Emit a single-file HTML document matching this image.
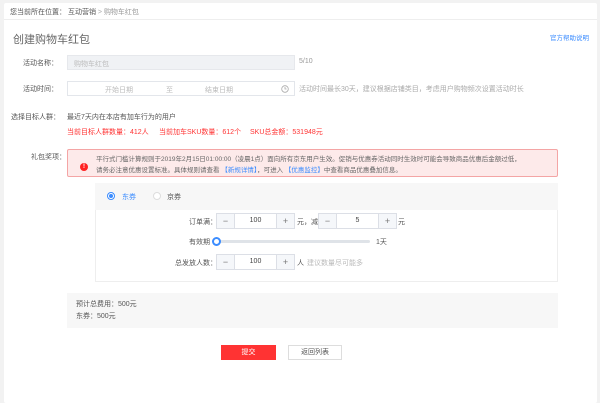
<!DOCTYPE html>
<html><head><meta charset="utf-8"><style>
*{margin:0;padding:0;box-sizing:border-box}
body{width:600px;height:400px;background:#f2f2f2;font-family:"Liberation Sans","Noto Sans CJK SC",sans-serif;font-size:7px;color:#555;position:relative;overflow:hidden}
.a{position:absolute;white-space:nowrap}
.card{position:absolute;left:4px;top:3px;width:593px;height:400px;background:#fff;border-radius:2px}
.lbl{position:absolute;text-align:right;width:56px;left:2px;color:#555}
.inp{position:absolute;border:1px solid #e3e6eb;height:15px;background:#fff}
.st{position:absolute;height:16px;width:79px;border:1px solid #dcdfe6;display:flex;background:#fff}
.st b{width:17px;background:#f5f7fa;color:#777;font-weight:normal;text-align:center;line-height:14px;font-size:9px}
.st span{flex:1;text-align:center;line-height:14px;border-left:1px solid #dcdfe6;border-right:1px solid #dcdfe6;color:#444}
.red{color:#f33}
</style></head><body>
<div class="card"></div>
<div class="a" style="left:4px;top:19px;width:593px;height:1px;background:#eee"></div>
<div class="a" style="left:10px;top:7px;color:#555">您当前所在位置： 互动营销 <span style="color:#aaa">&gt;</span> <span style="color:#999">购物车红包</span></div>
<div class="a" style="left:13px;top:31px;font-size:11px;color:#666">创建购物车红包</div>
<div class="a" style="left:550px;top:32px;color:#3b8cff;font-size:6.5px">官方帮助说明</div>

<div class="lbl a" style="top:58px">活动名称：</div>
<div class="inp" style="left:67px;top:55px;width:228px;background:#f0f2f5;border-color:#e6e8ec"><span class="a" style="left:6px;top:3px;color:#bbb">购物车红包</span></div>
<div class="a" style="left:299px;top:58px;color:#999">5/10</div>

<div class="lbl a" style="top:84px">活动时间：</div>
<div class="inp" style="left:67px;top:81px;width:228px">
<span class="a" style="left:37px;top:3px;color:#bbb">开始日期</span>
<span class="a" style="left:98px;top:3px;color:#bbb">至</span>
<span class="a" style="left:137px;top:3px;color:#bbb">结束日期</span>
<svg class="a" style="left:213px;top:3px" width="8" height="8" viewBox="0 0 8 8"><circle cx="4" cy="4" r="3.3" fill="none" stroke="#aaa" stroke-width=".8"/><path d="M4 2v2h1.6" fill="none" stroke="#aaa" stroke-width=".8"/></svg>
</div>
<div class="a" style="left:299px;top:84px;color:#aaa">活动时间最长30天，建议根据店铺类目，考虑用户购物频次设置活动时长</div>

<div class="a" style="left:11px;top:112px">选择目标人群：</div>
<div class="a" style="left:67px;top:112px">最近7天内在本店有加车行为的用户</div>
<div class="a red" style="left:67px;top:127px">当前目标人群数量：412人</div>
<div class="a red" style="left:159px;top:127px">当前加车SKU数量：612个</div>
<div class="a red" style="left:250px;top:127px">SKU总金额：531948元</div>

<div class="a" style="left:31px;top:152px">礼包奖项：</div>
<div class="a" style="left:67px;top:149px;width:491px;height:28px;background:#fdeaea;border:1px solid #f4a5a5;border-radius:2px"></div>
<div class="a" style="left:80px;top:163px;width:8px;height:8px;border-radius:50%;background:#f22;color:#fff;font-size:6px;line-height:8px;text-align:center;font-weight:bold">!</div>
<div class="a" style="left:96px;top:153px;color:#666;font-size:6.5px">平行式门槛计算规则于2019年2月15日01:00:00（凌晨1点）面向所有京东用户生效。促销与优惠券活动同时生效时可能会导致商品优惠后金额过低，</div>
<div class="a" style="left:96px;top:164px;color:#666;font-size:6.5px">请务必注意优惠设置标准。具体规则请查看 <span style="color:#3b8cff">【新规详情】</span>，可进入 <span style="color:#3b8cff">【优惠监控】</span>中查看商品优惠叠加信息。</div>

<div class="a" style="left:95px;top:183px;width:463px;height:99px;border:1px solid #eee;background:#fff"></div>
<div class="a" style="left:95px;top:183px;width:463px;height:27px;background:#f7f7f7"></div>
<div class="a" style="left:107px;top:192px;width:8px;height:8px;border-radius:50%;border:1px solid #3b8cff;background:#fff"><div style="width:4px;height:4px;margin:1px;border-radius:50%;background:#3b8cff"></div></div>
<div class="a" style="left:122px;top:192px;color:#3b8cff">东券</div>
<div class="a" style="left:153px;top:192px;width:8px;height:8px;border-radius:50%;border:1px solid #ddd;background:#fff"></div>
<div class="a" style="left:167px;top:192px">京券</div>

<div class="a" style="left:189px;top:217px">订单满：</div>
<div class="st" style="left:216px;top:213px"><b>−</b><span>100</span><b>+</b></div>
<div class="a" style="left:297px;top:217px">元，减</div>
<div class="st" style="left:318px;top:213px"><b>−</b><span>5</span><b>+</b></div>
<div class="a" style="left:398px;top:217px">元</div>

<div class="a" style="left:189px;top:237px">有效期</div>
<div class="a" style="left:216px;top:240px;width:154px;height:3px;background:#dfe3e8;border-radius:2px"></div>
<div class="a" style="left:212px;top:237px;width:9px;height:9px;border-radius:50%;border:2px solid #3b8cff;background:#fff"></div>
<div class="a" style="left:376px;top:237px">1天</div>

<div class="a" style="left:175px;top:258px">总发放人数：</div>
<div class="st" style="left:216px;top:254px"><b>−</b><span>100</span><b>+</b></div>
<div class="a" style="left:297px;top:258px">人</div>
<div class="a" style="left:307px;top:258px;color:#bbb">建议数量尽可能多</div>

<div class="a" style="left:67px;top:293px;width:491px;height:35px;background:#f7f7f7"></div>
<div class="a" style="left:76px;top:299px;color:#555">预计总费用：500元</div>
<div class="a" style="left:76px;top:311px;color:#555">东券：500元</div>

<div class="a" style="left:221px;top:345px;width:55px;height:15px;background:#f33;color:#fff;text-align:center;line-height:15px">提交</div>
<div class="a" style="left:288px;top:345px;width:54px;height:15px;border:1px solid #ddd;background:#fff;text-align:center;line-height:13px">返回列表</div>
</body></html>
